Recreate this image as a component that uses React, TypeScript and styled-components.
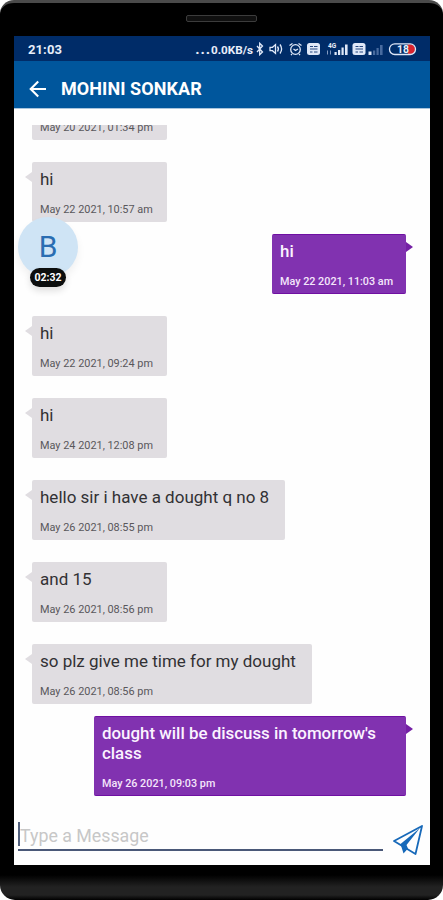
import React from "react";
import styled, { createGlobalStyle, css } from "styled-components";

const GlobalStyle = createGlobalStyle`
  *, *::before, *::after { box-sizing: border-box; }
  body { margin: 0; background: #fff; font-family: Roboto, sans-serif; }
`;

const Phone = styled.div`
  width: 443px;
  height: 900px;
  display: flex;
  flex-direction: column;
  padding: 0 13px 0 14px;
  border-top: 3px solid #4a4a4a;
  border-radius: 14px 14px 15px 15px;
  background: linear-gradient(#000 0 872px, #222 884px, #222 892px, #000 897px);
  overflow: hidden;
`;

const Earpiece = styled.div`
  flex: none;
  width: 71px;
  height: 7px;
  margin: 12px auto 14px 172px;
  border: 1px solid #3c3c3c;
  border-radius: 2px;
  background: #101010;
`;

const Screen = styled.main`
  height: 829px;
  display: flex;
  flex-direction: column;
  background: #fefefe;
`;

const StatusBar = styled.div`
  flex: none;
  height: 25px;
  display: flex;
  align-items: center;
  padding: 1px 13px 0 14px;
  background: #002c68;
  color: #e8eefa;
`;

const Clock = styled.span`
  font-size: 13px;
  font-weight: 700;
  letter-spacing: 0.1px;
  margin-right: auto;
`;

const NetSpeed = styled.span`
  display: flex;
  align-items: baseline;
  font-size: 11.7px;
  line-height: 16px;
  font-weight: 700;
  white-space: nowrap;
`;

const Dots = styled.span`
  font-size: 15px;
  letter-spacing: 0.9px;
`;

const StatusIcons = styled.svg`
  flex: none;
  display: block;
  width: 164px;
  height: 16px;
`;

const Header = styled.header`
  flex: none;
  height: 48px;
  display: flex;
  align-items: center;
  padding: 8px 14px 0 15px;
  background: #00569c;
  color: #fff;
  border-bottom: 1px solid #a9c5dd;
`;

const BackIcon = styled.svg`
  width: 18px;
  height: 18px;
  margin-right: 14px;
`;

const Title = styled.h1`
  margin: 0;
  font-size: 18px;
  line-height: 22px;
  font-weight: 700;
  letter-spacing: 0.07px;
`;

const Thread = styled.div`
  flex: none;
  height: 685px;
  margin-top: 16px;
  padding: 0 24px 0 18px;
  overflow: hidden;
  display: flex;
  flex-direction: column;
`;

const Tail = css<{ $mine?: boolean }>`
  &::after {
    content: "";
    position: absolute;
    top: ${({ $mine }) => ($mine ? "7px" : "10px")};
    border: solid transparent;
    border-width: 5px 0;
    ${({ $mine }) =>
      $mine
        ? css`left: 100%; border-left: 7px solid #7520a5;`
        : css`right: 100%; border-right: 7px solid #e0dde1;`}
  }
`;

const Bubble = styled.article<{ $mine?: boolean; $scrolled?: boolean }>`
  position: relative;
  flex: none;
  min-width: ${({ $mine }) => ($mine ? "134px" : "135px")};
  max-width: 312px;
  padding: 7px 16px 7px 8px;
  border-radius: 2px;
  ${({ $mine }) =>
    $mine
      ? css`
          align-self: flex-end;
          margin: 12px 0 -0.7px;
          background: #8132b0;
          color: #fbf3ff;
          border-top: 1px solid #6f10a2;
          border-bottom: 1px solid #6f10a2;
          padding-top: 6px;
          padding-bottom: 6px;
        `
      : css`
          align-self: flex-start;
          margin-top: 22.1px;
          background: #e0dde1;
          color: #323134;
        `}
  ${({ $scrolled }) => ($scrolled ? css`margin-top: -9px;` : Tail)}
`;

const Body = styled.p<{ $mine?: boolean }>`
  margin: 0 0 16px;
  font-size: ${({ $mine }) => ($mine ? "16.9px" : "17px")};
  line-height: 20px;
  font-weight: ${({ $mine }) => ($mine ? 500 : 400)};
`;

const Stamp = styled.time<{ $mine?: boolean }>`
  display: block;
  margin-right: -4px;
  font-size: ${({ $mine }) => ($mine ? "10.8px" : "10.9px")};
  line-height: 10px;
  white-space: nowrap;
  color: ${({ $mine }) => ($mine ? "#f4e6fb" : "#59575b")};
  font-weight: ${({ $mine }) => ($mine ? 500 : 400)};
`;

const CallBubble = styled.aside`
  position: absolute;
  left: 18px;
  top: 217px;
  width: 60px;
  display: flex;
  flex-direction: column;
  align-items: center;
`;

const Avatar = styled.div`
  width: 60px;
  height: 60px;
  border-radius: 50%;
  background: #cfe4f5;
  color: #2a6db2;
  font-size: 30px;
  line-height: 59px;
  text-align: center;
  box-shadow: 0 5px 8px rgba(0, 0, 0, 0.06);
`;

const Duration = styled.span`
  width: 36px;
  height: 19px;
  margin-top: -9px;
  border-radius: 10px;
  background: #0c0e0e;
  color: #fff;
  font-size: 10.5px;
  line-height: 20px;
  font-weight: 700;
  text-align: center;
  box-shadow: 0 4px 7px rgba(0, 0, 0, 0.12);
`;

const Composer = styled.footer`
  flex: 1;
  display: flex;
  align-items: flex-start;
  padding: 12px 6px 0 4px;
`;

const Field = styled.div`
  width: 365px;
  height: 29px;
  display: flex;
  align-items: flex-start;
  border-bottom: 2px solid #4a5878;
  color: #c7c7c7;
  font-size: 17.8px;
  line-height: 27px;
`;

const Caret = styled.span`
  width: 2px;
  height: 24px;
  background: #52607d;
`;

const SendIcon = styled.svg`
  width: 32px;
  height: 32px;
  margin: 2px 0 0 9px;
`;

const GlyphLabel = styled.text`
  font-family: Roboto, sans-serif;
  font-weight: 700;
  fill: #e8eefa;
  stroke: none;
`;

type Message = { text?: string; at: string; mine?: boolean };

const messages: Message[] = [
  { at: "May 20 2021, 01:34 pm" },
  { text: "hi", at: "May 22 2021, 10:57 am" },
  { text: "hi", at: "May 22 2021, 11:03 am", mine: true },
  { text: "hi", at: "May 22 2021, 09:24 pm" },
  { text: "hi", at: "May 24 2021, 12:08 pm" },
  { text: "hello sir i have a dought q no 8", at: "May 26 2021, 08:55 pm" },
  { text: "and 15", at: "May 26 2021, 08:56 pm" },
  { text: "so plz give me time for my dought", at: "May 26 2021, 08:56 pm" },
  { text: "dought will be discuss in tomorrow's class", at: "May 26 2021, 09:03 pm", mine: true },
];

function StatusGlyphs() {
  return (
    <StatusIcons viewBox="0 0 164 16" fill="none" stroke="#dfe8f8" strokeWidth="1.3">
      <path d="M4 5 L9.5 11 L6.7 13.8 V2.2 L9.5 5 L4 11" />
      <path d="M17 6.3 h2.5 L22.5 3.6 V12.4 L19.5 9.7 H17 Z M24.5 5.5 q1.8 2.5 0 5 M27 3.5 q3.2 4.5 0 9" />
      <circle cx="42.5" cy="8.5" r="4.8" />
      <path d="M36.5 4.5 L39.5 2.5 M48.5 4.5 L45.5 2.5 M40.5 8 L42.5 9.5 L45 8 M39 13 L38 14.2 M46 13 L47 14.2" />
      <g stroke="none" fill="#dfe8f8">
        <rect x="54" y="2" width="13" height="12" rx="2.5" />
        <rect x="99.5" y="2" width="13" height="12" rx="2.5" />
        <path d="M81.5 11h2.2v3h-2.2z M85 9h2.2v5H85z M88.5 6.5h2.2V14h-2.2z M92 3.5h2.6V14H92z M115.5 10.5h3v3.5h-3z" />
        <path d="M120 9.5h2.2V14H120z M123.5 7h2.2v7h-2.2z M127 4h2.6v10H127z" fill="#486b9f" />
      </g>
      <path
        d="M57 5.5h3 M61 5.5h3.5 M57 8h7.5 M57 11h2.5 M61 11h3.5 M102.5 5.5h3 M106.5 5.5h3.5 M102.5 8h7.5 M102.5 11h2.5 M106.5 11h3.5"
        stroke="#24477f"
        strokeWidth="1"
      />
      <GlyphLabel x="75" y="7" fontSize="6.5">4G</GlyphLabel>
      <path d="M74.5 13.5 V9.5 M77.5 9.5 V13.5" strokeWidth="0.9" stroke="#93a8cc" />
      <path d="M155 3.3 h2.2 a4.9 4.9 0 0 1 0 9.8 h-2.2 Z" fill="#d8232f" stroke="none" />
      <rect x="136.5" y="2.8" width="26" height="10.7" rx="5.3" />
      <GlyphLabel x="144" y="12" fontSize="10.5">18</GlyphLabel>
    </StatusIcons>
  );
}

export default function App() {
  return (
    <>
      <GlobalStyle />
      <Phone>
        <Earpiece />
        <Screen>
          <StatusBar>
            <Clock>21:03</Clock>
            <NetSpeed>
              <Dots>...</Dots>0.0KB/s
            </NetSpeed>
            <StatusGlyphs />
          </StatusBar>
          <Header>
            <BackIcon viewBox="0 0 18 18" fill="none" stroke="#fff" strokeWidth="2.1">
              <path d="M17 9 H2 M9.2 1.5 L1.7 9 L9.2 16.5" />
            </BackIcon>
            <Title>MOHINI SONKAR</Title>
          </Header>
          <Thread>
            {messages.map((m, i) => (
              <Bubble key={i} $mine={m.mine} $scrolled={!m.text}>
                {m.text && <Body $mine={m.mine}>{m.text}</Body>}
                <Stamp $mine={m.mine}>{m.at}</Stamp>
              </Bubble>
            ))}
          </Thread>
          <Composer>
            <Field>
              <Caret />
              Type a Message
            </Field>
            <SendIcon viewBox="0 0 32 32">
              <path d="M30 2 L2 17 L23.5 30 Z" fill="none" stroke="#1769b9" strokeWidth="1.8" strokeLinejoin="round" />
              <path d="M28 4 L8.5 20 L11.5 29.5 L16 24.5 L14.5 21 Z" fill="#1769b9" />
            </SendIcon>
          </Composer>
        </Screen>
      </Phone>
      <CallBubble>
        <Avatar>B</Avatar>
        <Duration>02:32</Duration>
      </CallBubble>
    </>
  );
}
